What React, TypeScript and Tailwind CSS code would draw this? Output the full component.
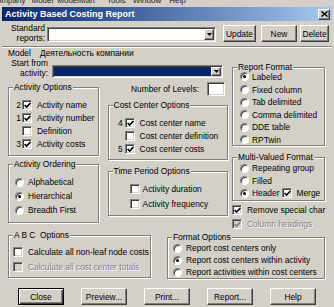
import React from "react";

const sunken =
  "border border-t-[#808080] border-l-[#808080] border-b-white border-r-white shadow-[inset_1px_1px_0_#404040,inset_-1px_-1px_0_#d4d0c8]";
const raised =
  "border border-t-white border-l-white border-b-[#404040] border-r-[#404040] shadow-[inset_-1px_-1px_0_#808080]";
const grayText = "text-[#808080] [text-shadow:1px_1px_0_#fff]";

const Box = ({ checked, disabled }: { checked?: boolean; disabled?: boolean }) => (
  <span className={`relative inline-block shrink-0 w-[10px] h-[10px] ${sunken} ${disabled ? "bg-[#d4d0c8]" : "bg-white"}`}>
    {checked && (
      <svg className="absolute left-[1px] top-[1px]" width="7" height="7" viewBox="0 0 7 7">
        <path d="M0.6 3 L2.6 5 L6.4 1" fill="none" stroke={disabled ? "#808080" : "#000"} strokeWidth="1.7" />
      </svg>
    )}
  </span>
);

const Radio = ({ checked }: { checked?: boolean }) => (
  <span className="relative inline-flex shrink-0 items-center justify-center w-[9px] h-[9px] rounded-full border border-t-[#808080] border-l-[#808080] border-b-white border-r-white bg-white shadow-[inset_1px_1px_0_#404040]">
    {checked && <span className="w-[3px] h-[3px] rounded-full bg-black" />}
  </span>
);

const Group = ({ title, className, children }: { title: string; className: string; children?: React.ReactNode }) => (
  <div className={`relative border border-[#808080] shadow-[inset_1px_1px_0_#fff,1px_1px_0_#fff] ${className}`}>
    <span className="absolute -top-[6px] left-[4px] bg-[#d4d0c8] px-[1px] leading-[10px] whitespace-pre">{title}</span>
    {children}
  </div>
);

const Button = ({ label, w, def }: { label: string; w: string; def?: boolean }) => (
  <div
    className={`${w} h-[17px] flex items-center justify-center ${
      def
        ? "border border-black shadow-[inset_1px_1px_0_#fff,inset_-1px_-1px_0_#404040,inset_-2px_-2px_0_#808080]"
        : raised
    }`}
  >
    {label}
  </div>
);

const DropBtn = () => (
  <span className={`w-[10px] h-full flex items-center justify-center bg-[#d4d0c8] ${raised}`}>
    <svg width="5" height="3" viewBox="0 0 5 3">
      <path d="M0 0 H5 L2.5 3 Z" fill="#000" />
    </svg>
  </span>
);

export default function App() {
  return (
    <div className="w-[334px] h-[307px] overflow-hidden bg-[#d4d0c8] text-black [font-family:'Liberation_Sans',Arial,sans-serif] text-[8.4px] leading-[10px]">
      {/* menu bar of the main window, mostly hidden */}
      <div className="h-[6px] overflow-hidden">
        <div className="flex -mt-[4px] text-[8px] whitespace-nowrap text-[#202020]">
          <span className="-ml-[3px]">ompany</span>
          <span className="ml-[6px]">Model</span>
          <span className="ml-[4px]">ModelMart</span>
          <span className="ml-[12px]">Tools</span>
          <span className="ml-[7px]">Window</span>
          <span className="ml-[8px]">Help</span>
        </div>
      </div>

      {/* title bar */}
      <div className="mx-[2px] mt-[1px] h-[14px] flex items-center bg-linear-to-r from-[#0a246a] to-[#a6caf0] pl-[3px] pr-[2px]">
        <span className="text-white font-bold text-[9px]">Activity Based Costing Report</span>
        <span className={`ml-auto w-[12px] h-[11px] flex items-center justify-center bg-[#d4d0c8] ${raised}`}>
          <svg width="7" height="6" viewBox="0 0 7 6">
            <path d="M0.5 0.5 L6.5 5.5 M6.5 0.5 L0.5 5.5" stroke="#000" strokeWidth="1.5" />
          </svg>
        </span>
      </div>

      {/* standard reports */}
      <div className="flex items-start mt-[2px]">
        <div className="w-[45px] text-right">
          Standard
          <br />
          reports:
        </div>
        <div className={`ml-[2px] mt-[4px] w-[169px] h-[15px] bg-white flex justify-end p-[1px] ${sunken}`}>
          <DropBtn />
        </div>
        <div className="ml-[7px] mt-[2px]">
          <Button label="Update" w="w-[33px]" />
        </div>
        <div className="ml-[5px] mt-[2px]">
          <Button label="New" w="w-[36px]" />
        </div>
        <div className="ml-[3px] mt-[2px]">
          <Button label="Delete" w="w-[29px]" />
        </div>
      </div>

      <div className="mx-[2px] mt-[3px] h-[2px] border-t border-t-[#808080] border-b border-b-white" />

      <div className="h-[10px] flex items-center">
        <span className="ml-[8px] w-[32px]">Model</span>
        <span>Деятельность компании</span>
      </div>

      {/* main area */}
      <div className="flex h-[172px]">
        <div className="w-[228px] flex flex-col">
          <div className="flex items-start h-[20px]">
            <div className="w-[48px] text-right">
              Start from
              <br />
              activity:
            </div>
            <div className={`ml-[4px] mt-[7px] w-[171px] h-[13px] bg-[#0a246a] flex justify-end p-[1px] ${sunken}`}>
              <DropBtn />
            </div>
          </div>

          <div className="flex mt-[4px]">
            {/* left column */}
            <div className="ml-[8px] w-[91px] flex flex-col">
              <Group title="Activity Options" className="mt-[5px] h-[69px] pt-[10px]">
                {[
                  ["2", true, "Activity name"],
                  ["1", true, "Activity number"],
                  ["", false, "Definition"],
                  ["3", true, "Activity costs"],
                ].map(([n, c, l]) => (
                  <div key={l as string} className="h-[13px] flex items-center pl-[6px]">
                    <span className="w-[6px] text-right">{n as string}</span>
                    <span className="ml-[1px] flex">
                      <Box checked={c as boolean} />
                    </span>
                    <span className="ml-[5px] whitespace-nowrap">{l as string}</span>
                  </div>
                ))}
              </Group>
              <Group title="Activity Ordering" className="mt-[8px] h-[59px] pt-[10px]">
                {[
                  ["Alphabetical", false],
                  ["Hierarchical", true],
                  ["Breadth First", false],
                ].map(([l, c]) => (
                  <div key={l as string} className="h-[14px] flex items-center pl-[6px]">
                    <Radio checked={c as boolean} />
                    <span className="ml-[4px]">{l as string}</span>
                  </div>
                ))}
              </Group>
            </div>

            {/* middle column */}
            <div className="ml-[9px] w-[121px] flex flex-col">
              <div className="h-[14px] flex items-center justify-end pr-[3px]">
                <span>Number of Levels:</span>
                <span className={`ml-[8px] w-[18px] h-[14px] bg-white ${sunken}`} />
              </div>
              <Group title="Cost Center Options" className="mt-[9px] h-[55px] pt-[10px]">
                {[
                  ["4", true, "Cost center name"],
                  ["", false, "Cost center definition"],
                  ["5", true, "Cost center costs"],
                ].map(([n, c, l]) => (
                  <div key={l as string} className="h-[13px] flex items-center pl-[9px]">
                    <span className="w-[5px] text-right">{n as string}</span>
                    <span className="ml-[2px] flex">
                      <Box checked={c as boolean} />
                    </span>
                    <span className="ml-[5px] whitespace-nowrap">{l as string}</span>
                  </div>
                ))}
              </Group>
              <Group title="Time Period Options" className="mt-[11px] h-[45px] pt-[9px]">
                {["Activity duration", "Activity frequency"].map((l) => (
                  <div key={l} className="h-[15px] flex items-center pl-[21px]">
                    <Box />
                    <span className="ml-[3px]">{l}</span>
                  </div>
                ))}
              </Group>
            </div>
          </div>
        </div>

        {/* right column */}
        <div className="ml-[4px] w-[93px] flex flex-col">
          <Group title="Report Format" className="mt-[9px] h-[79px] pt-[2.7px]">
            {["Labeled", "Fixed column", "Tab delimited", "Comma delimited", "DDE table", "RPTwin"].map((l, i) => (
              <div key={l} className="h-[12.6px] flex items-center pl-[7px]">
                <Radio checked={i === 0} />
                <span className="ml-[3px] whitespace-nowrap">{l}</span>
              </div>
            ))}
          </Group>
          <Group title="Multi-Valued Format" className="mt-[11px] h-[46px] pt-[3.75px]">
            <div className="h-[12.5px] flex items-center pl-[7px]">
              <Radio />
              <span className="ml-[3px]">Repeating group</span>
            </div>
            <div className="h-[12.5px] flex items-center pl-[7px]">
              <Radio />
              <span className="ml-[3px]">Filled</span>
            </div>
            <div className="h-[12.5px] flex items-center pl-[7px] whitespace-nowrap">
              <Radio checked />
              <span className="ml-[3px]">Header</span>
              <span className="ml-[3px] flex">
                <Box checked />
              </span>
              <span className="ml-[4px]">Merge</span>
            </div>
          </Group>
          <div className="mt-[3px] h-[12px] flex items-center">
            <Box checked />
            <span className="ml-[5px] whitespace-nowrap">Remove special char</span>
          </div>
          <div className="mt-[3px] h-[12px] flex items-center">
            <Box checked disabled />
            <span className={`ml-[5px] whitespace-nowrap ${grayText}`}>Column headings</span>
          </div>
        </div>
      </div>

      {/* bottom groups */}
      <div className="flex items-start">
        <Group title="A B C  Options" className="ml-[8px] mt-[5px] w-[143px] h-[43px] pt-[8.5px]">
          <div className="h-[15px] flex items-center pl-[4px]">
            <Box />
            <span className="ml-[5px]">Calculate all non-leaf node costs</span>
          </div>
          <div className="h-[15px] flex items-center pl-[4px]">
            <Box disabled />
            <span className={`ml-[5px] ${grayText}`}>Calculate all cost center totals</span>
          </div>
        </Group>
        <Group title="Format Options" className="ml-[16px] mt-[7px] w-[158px] h-[42px] pt-[4px]">
          {[
            ["Report cost centers only", false],
            ["Report cost centers within activity", true],
            ["Report activities within cost centers", false],
          ].map(([l, c]) => (
            <div key={l as string} className="h-[12px] flex items-center pl-[5px]">
              <Radio checked={c as boolean} />
              <span className="ml-[4px] whitespace-nowrap">{l as string}</span>
            </div>
          ))}
        </Group>
      </div>

      {/* dialog buttons */}
      <div className="flex gap-[17px] pl-[18px] mt-[9px]">
        <Button label="Close" w="w-[46px]" def />
        <Button label="Preview..." w="w-[46px]" />
        <Button label="Print..." w="w-[46px]" />
        <Button label="Report..." w="w-[46px]" />
        <Button label="Help" w="w-[46px]" />
      </div>
    </div>
  );
}
